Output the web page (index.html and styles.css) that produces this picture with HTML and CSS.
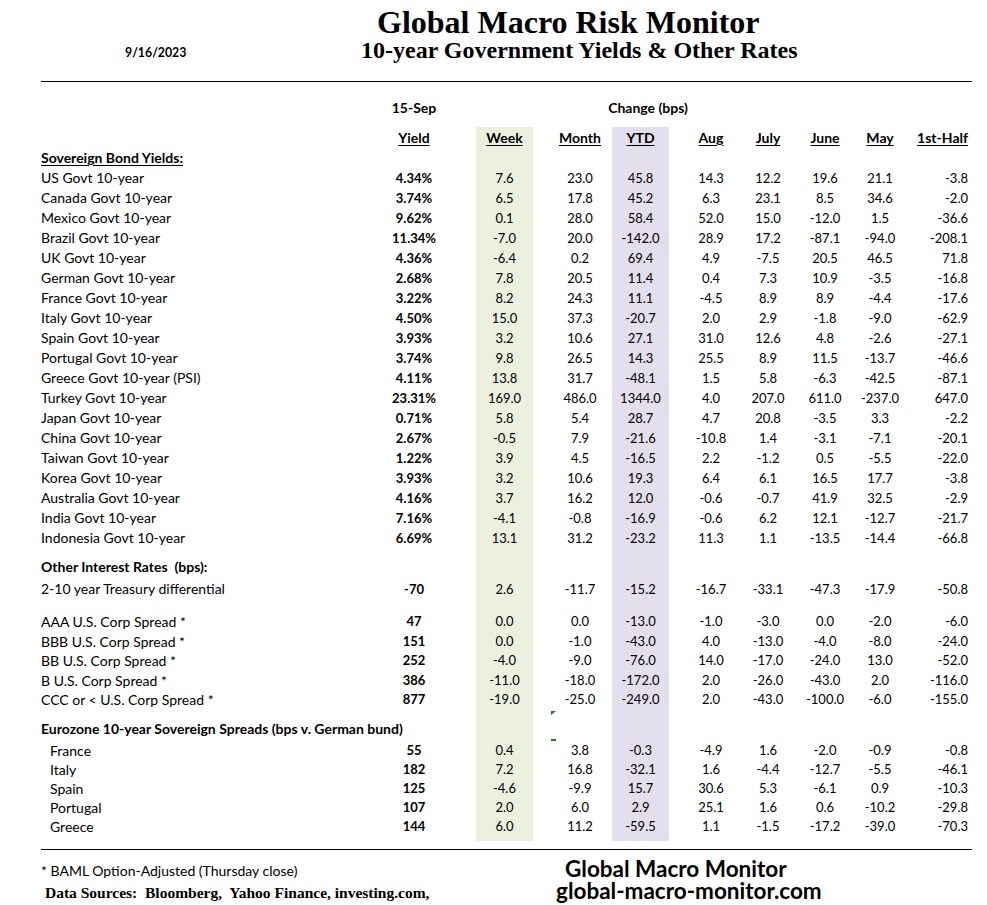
FILE: index.html
```html
<!DOCTYPE html>
<html>
<head>
<meta charset="utf-8">
<link rel="stylesheet" href="styles.css">
</head>
<body>
<div class="page">
  <header class="header">
    <div class="date">9/16/2023</div>
    <div class="titles">
      <div class="title">Global Macro Risk Monitor</div>
      <div class="subtitle">10-year Government Yields &amp; Other Rates</div>
    </div>
  </header>

  <div class="row toprow">
    <span class="c yld">15-Sep</span>
    <span class="chg">Change (bps)</span>
  </div>

  <div class="table">
    <div class="row head">
      <span class="c yld u">Yield</span><span class="c wk u">Week</span><span class="c mo u">Month</span><span class="c ytd u">YTD</span><span class="c aug u">Aug</span><span class="c jul u">July</span><span class="c jun u">June</span><span class="c may u">May</span><span class="c half hh u">1st-Half</span>
    </div>

    <div class="row"><span class="lbl sec u">Sovereign Bond Yields:</span></div>
    <div class="row"><span class="lbl">US Govt 10-year</span><span class="c yld">4.34%</span><span class="c wk">7.6</span><span class="c mo">23.0</span><span class="c ytd">45.8</span><span class="c aug">14.3</span><span class="c jul">12.2</span><span class="c jun">19.6</span><span class="c may">21.1</span><span class="c half">-3.8</span></div>
    <div class="row"><span class="lbl">Canada Govt 10-year</span><span class="c yld">3.74%</span><span class="c wk">6.5</span><span class="c mo">17.8</span><span class="c ytd">45.2</span><span class="c aug">6.3</span><span class="c jul">23.1</span><span class="c jun">8.5</span><span class="c may">34.6</span><span class="c half">-2.0</span></div>
    <div class="row"><span class="lbl">Mexico Govt 10-year</span><span class="c yld">9.62%</span><span class="c wk">0.1</span><span class="c mo">28.0</span><span class="c ytd">58.4</span><span class="c aug">52.0</span><span class="c jul">15.0</span><span class="c jun">-12.0</span><span class="c may">1.5</span><span class="c half">-36.6</span></div>
    <div class="row"><span class="lbl">Brazil Govt 10-year</span><span class="c yld">11.34%</span><span class="c wk">-7.0</span><span class="c mo">20.0</span><span class="c ytd">-142.0</span><span class="c aug">28.9</span><span class="c jul">17.2</span><span class="c jun">-87.1</span><span class="c may">-94.0</span><span class="c half">-208.1</span></div>
    <div class="row"><span class="lbl">UK Govt 10-year</span><span class="c yld">4.36%</span><span class="c wk">-6.4</span><span class="c mo">0.2</span><span class="c ytd">69.4</span><span class="c aug">4.9</span><span class="c jul">-7.5</span><span class="c jun">20.5</span><span class="c may">46.5</span><span class="c half">71.8</span></div>
    <div class="row"><span class="lbl">German Govt 10-year</span><span class="c yld">2.68%</span><span class="c wk">7.8</span><span class="c mo">20.5</span><span class="c ytd">11.4</span><span class="c aug">0.4</span><span class="c jul">7.3</span><span class="c jun">10.9</span><span class="c may">-3.5</span><span class="c half">-16.8</span></div>
    <div class="row"><span class="lbl">France Govt 10-year</span><span class="c yld">3.22%</span><span class="c wk">8.2</span><span class="c mo">24.3</span><span class="c ytd">11.1</span><span class="c aug">-4.5</span><span class="c jul">8.9</span><span class="c jun">8.9</span><span class="c may">-4.4</span><span class="c half">-17.6</span></div>
    <div class="row"><span class="lbl">Italy Govt 10-year</span><span class="c yld">4.50%</span><span class="c wk">15.0</span><span class="c mo">37.3</span><span class="c ytd">-20.7</span><span class="c aug">2.0</span><span class="c jul">2.9</span><span class="c jun">-1.8</span><span class="c may">-9.0</span><span class="c half">-62.9</span></div>
    <div class="row"><span class="lbl">Spain Govt 10-year</span><span class="c yld">3.93%</span><span class="c wk">3.2</span><span class="c mo">10.6</span><span class="c ytd">27.1</span><span class="c aug">31.0</span><span class="c jul">12.6</span><span class="c jun">4.8</span><span class="c may">-2.6</span><span class="c half">-27.1</span></div>
    <div class="row"><span class="lbl">Portugal Govt 10-year</span><span class="c yld">3.74%</span><span class="c wk">9.8</span><span class="c mo">26.5</span><span class="c ytd">14.3</span><span class="c aug">25.5</span><span class="c jul">8.9</span><span class="c jun">11.5</span><span class="c may">-13.7</span><span class="c half">-46.6</span></div>
    <div class="row"><span class="lbl">Greece Govt 10-year (PSI)</span><span class="c yld">4.11%</span><span class="c wk">13.8</span><span class="c mo">31.7</span><span class="c ytd">-48.1</span><span class="c aug">1.5</span><span class="c jul">5.8</span><span class="c jun">-6.3</span><span class="c may">-42.5</span><span class="c half">-87.1</span></div>
    <div class="row"><span class="lbl">Turkey Govt 10-year</span><span class="c yld">23.31%</span><span class="c wk">169.0</span><span class="c mo">486.0</span><span class="c ytd">1344.0</span><span class="c aug">4.0</span><span class="c jul">207.0</span><span class="c jun">611.0</span><span class="c may">-237.0</span><span class="c half">647.0</span></div>
    <div class="row"><span class="lbl">Japan Govt 10-year</span><span class="c yld">0.71%</span><span class="c wk">5.8</span><span class="c mo">5.4</span><span class="c ytd">28.7</span><span class="c aug">4.7</span><span class="c jul">20.8</span><span class="c jun">-3.5</span><span class="c may">3.3</span><span class="c half">-2.2</span></div>
    <div class="row"><span class="lbl">China Govt 10-year</span><span class="c yld">2.67%</span><span class="c wk">-0.5</span><span class="c mo">7.9</span><span class="c ytd">-21.6</span><span class="c aug">-10.8</span><span class="c jul">1.4</span><span class="c jun">-3.1</span><span class="c may">-7.1</span><span class="c half">-20.1</span></div>
    <div class="row"><span class="lbl">Taiwan Govt 10-year</span><span class="c yld">1.22%</span><span class="c wk">3.9</span><span class="c mo">4.5</span><span class="c ytd">-16.5</span><span class="c aug">2.2</span><span class="c jul">-1.2</span><span class="c jun">0.5</span><span class="c may">-5.5</span><span class="c half">-22.0</span></div>
    <div class="row"><span class="lbl">Korea Govt 10-year</span><span class="c yld">3.93%</span><span class="c wk">3.2</span><span class="c mo">10.6</span><span class="c ytd">19.3</span><span class="c aug">6.4</span><span class="c jul">6.1</span><span class="c jun">16.5</span><span class="c may">17.7</span><span class="c half">-3.8</span></div>
    <div class="row"><span class="lbl">Australia Govt 10-year</span><span class="c yld">4.16%</span><span class="c wk">3.7</span><span class="c mo">16.2</span><span class="c ytd">12.0</span><span class="c aug">-0.6</span><span class="c jul">-0.7</span><span class="c jun">41.9</span><span class="c may">32.5</span><span class="c half">-2.9</span></div>
    <div class="row"><span class="lbl">India Govt 10-year</span><span class="c yld">7.16%</span><span class="c wk">-4.1</span><span class="c mo">-0.8</span><span class="c ytd">-16.9</span><span class="c aug">-0.6</span><span class="c jul">6.2</span><span class="c jun">12.1</span><span class="c may">-12.7</span><span class="c half">-21.7</span></div>
    <div class="row"><span class="lbl">Indonesia Govt 10-year</span><span class="c yld">6.69%</span><span class="c wk">13.1</span><span class="c mo">31.2</span><span class="c ytd">-23.2</span><span class="c aug">11.3</span><span class="c jul">1.1</span><span class="c jun">-13.5</span><span class="c may">-14.4</span><span class="c half">-66.8</span></div>

    <div class="row gap-sec"><span class="lbl sec">Other Interest Rates &nbsp;(bps):</span></div>
    <div class="row gap-small"><span class="lbl">2-10 year Treasury differential</span><span class="c yld">-70</span><span class="c wk">2.6</span><span class="c mo">-11.7</span><span class="c ytd">-15.2</span><span class="c aug">-16.7</span><span class="c jul">-33.1</span><span class="c jun">-47.3</span><span class="c may">-17.9</span><span class="c half">-50.8</span></div>

    <div class="row corp gap-corp"><span class="lbl">AAA U.S. Corp Spread *</span><span class="c yld">47</span><span class="c wk">0.0</span><span class="c mo">0.0</span><span class="c ytd">-13.0</span><span class="c aug">-1.0</span><span class="c jul">-3.0</span><span class="c jun">0.0</span><span class="c may">-2.0</span><span class="c half">-6.0</span></div>
    <div class="row corp"><span class="lbl">BBB U.S. Corp Spread *</span><span class="c yld">151</span><span class="c wk">0.0</span><span class="c mo">-1.0</span><span class="c ytd">-43.0</span><span class="c aug">4.0</span><span class="c jul">-13.0</span><span class="c jun">-4.0</span><span class="c may">-8.0</span><span class="c half">-24.0</span></div>
    <div class="row corp"><span class="lbl">BB U.S. Corp Spread *</span><span class="c yld">252</span><span class="c wk">-4.0</span><span class="c mo">-9.0</span><span class="c ytd">-76.0</span><span class="c aug">14.0</span><span class="c jul">-17.0</span><span class="c jun">-24.0</span><span class="c may">13.0</span><span class="c half">-52.0</span></div>
    <div class="row corp"><span class="lbl">B U.S. Corp Spread *</span><span class="c yld">386</span><span class="c wk">-11.0</span><span class="c mo">-18.0</span><span class="c ytd">-172.0</span><span class="c aug">2.0</span><span class="c jul">-26.0</span><span class="c jun">-43.0</span><span class="c may">2.0</span><span class="c half">-116.0</span></div>
    <div class="row corp"><span class="lbl">CCC or &lt; U.S. Corp Spread *</span><span class="c yld">877</span><span class="c wk">-19.0</span><span class="c mo flagged">-25.0<i class="flag flag-tri"></i></span><span class="c ytd">-249.0</span><span class="c aug">2.0</span><span class="c jul">-43.0</span><span class="c jun">-100.0</span><span class="c may">-6.0</span><span class="c half">-155.0</span></div>

    <div class="row gap-euro"><span class="lbl sec wide">Eurozone 10-year Sovereign Spreads (bps v. German bund)</span><span class="c mo flagged"><i class="flag flag-dash"></i></span></div>
    <div class="row euro first"><span class="lbl ind">France</span><span class="c yld">55</span><span class="c wk">0.4</span><span class="c mo">3.8</span><span class="c ytd">-0.3</span><span class="c aug">-4.9</span><span class="c jul">1.6</span><span class="c jun">-2.0</span><span class="c may">-0.9</span><span class="c half">-0.8</span></div>
    <div class="row euro"><span class="lbl ind">Italy</span><span class="c yld">182</span><span class="c wk">7.2</span><span class="c mo">16.8</span><span class="c ytd">-32.1</span><span class="c aug">1.6</span><span class="c jul">-4.4</span><span class="c jun">-12.7</span><span class="c may">-5.5</span><span class="c half">-46.1</span></div>
    <div class="row euro"><span class="lbl ind">Spain</span><span class="c yld">125</span><span class="c wk">-4.6</span><span class="c mo">-9.9</span><span class="c ytd">15.7</span><span class="c aug">30.6</span><span class="c jul">5.3</span><span class="c jun">-6.1</span><span class="c may">0.9</span><span class="c half">-10.3</span></div>
    <div class="row euro"><span class="lbl ind">Portugal</span><span class="c yld">107</span><span class="c wk">2.0</span><span class="c mo">6.0</span><span class="c ytd">2.9</span><span class="c aug">25.1</span><span class="c jul">1.6</span><span class="c jun">0.6</span><span class="c may">-10.2</span><span class="c half">-29.8</span></div>
    <div class="row euro"><span class="lbl ind">Greece</span><span class="c yld">144</span><span class="c wk">6.0</span><span class="c mo">11.2</span><span class="c ytd">-59.5</span><span class="c aug">1.1</span><span class="c jul">-1.5</span><span class="c jun">-17.2</span><span class="c may">-39.0</span><span class="c half">-70.3</span></div>
  </div>

  <footer class="footer">
    <div class="notes">
      <div class="note">* BAML Option-Adjusted (Thursday close)</div>
      <div class="sources">Data Sources:&nbsp; Bloomberg,&nbsp; Yahoo Finance, investing.com,</div>
    </div>
    <div class="brand">
      <div class="brand-name">Global Macro Monitor</div>
      <div class="brand-url">global-macro-monitor.com</div>
    </div>
  </footer>
</div>
</body>
</html>
```

FILE: styles.css
```css
html, body {
  margin: 0;
  padding: 0;
  background: #ffffff;
}

body {
  font-family: "Lato", "Liberation Sans", sans-serif;
  font-size: 13px;
  color: #000;
}

.page {
  width: 931px;
  margin-left: 41px;
}

/* ---------- header ---------- */
.header {
  height: 81px;
  border-bottom: 1px solid #000;
  display: grid;
  grid-template-columns: 320px 1fr;
  box-sizing: content-box;
}

.date {
  padding-left: 84px;
  margin-top: 43px;
  line-height: 20px;
  height: 20px;
  font-size: 12.3px;
  font-weight: 700;
}

.titles {
  font-family: "Liberation Serif", "Times New Roman", serif;
  font-weight: 700;
  white-space: nowrap;
}

.title {
  font-size: 32px;
  line-height: 31px;
  padding-top: 7px;
  padding-left: 16px;
}

.subtitle {
  font-size: 24px;
  line-height: 24px;
}

/* ---------- grid rows ---------- */
.row {
  display: grid;
  grid-template-columns: 343px 60px 32px 57px 15px 64px 57px 15px 54px 3px 54px 3px 54px 1px 54px 61px;
  height: 20px;
  line-height: 20px;
}

.lbl {
  grid-column: 1;
  white-space: nowrap;
  font-size: 14px;
}

.c {
  display: flex;
  justify-content: center;
  white-space: nowrap;
}

.yld { grid-column: 2; font-weight: 700; }
.wk { grid-column: 4; }
.mo { grid-column: 6; }
.ytd { grid-column: 7; }
.aug { grid-column: 9; }
.jul { grid-column: 11; }
.jun { grid-column: 13; }
.may { grid-column: 15; }
.half { grid-column: 16; justify-content: flex-end; }

.u {
  text-decoration: underline;
  text-underline-offset: 2px;
}

.toprow {
  margin-top: 16px;
  font-weight: 700;
  font-size: 14px;
}

.chg {
  grid-column: 6 / 10;
  text-align: center;
  padding-left: 10px;
  white-space: nowrap;
}

/* ---------- table body with column bands ---------- */
.table {
  margin-top: 9px;
  padding-bottom: 5.5px;
  background-image: linear-gradient(to right,
    transparent 0, transparent 435px,
    #ebf1de 435px, #ebf1de 492px,
    transparent 492px, transparent 571px,
    #e4dfec 571px, #e4dfec 628px,
    transparent 628px);
}

.head {
  height: 21px;
  line-height: 22px;
  font-weight: 700;
  font-size: 14px;
}

.head .c { font-weight: 700; }

.sec {
  font-weight: 700;
}

.wide {
  grid-column: 1 / 6;
}

.gap-sec { margin-top: 9px; }
.gap-small { margin-top: 2px; }
.gap-corp { margin-top: 13px; }
.gap-euro { margin-top: 9.5px; }

.corp {
  height: 19.5px;
  line-height: 19.5px;
}

.euro {
  height: 19px;
  line-height: 19px;
}

.euro.first { margin-top: 1.5px; }

.ind { padding-left: 9px; }

/* little spreadsheet cell markers */
.flagged { position: relative; }

.flag {
  position: absolute;
  left: 3px;
  display: block;
}

.flag-tri {
  top: 21px;
  width: 0;
  height: 0;
  border-top: 4px solid #1f7a1f;
  border-right: 5px solid transparent;
}

.flag-dash {
  top: 20px;
  width: 5px;
  height: 1.5px;
  background: #1f7a1f;
}

/* ---------- footer ---------- */
.footer {
  margin-top: 8px;
  border-top: 1px solid #000;
  display: grid;
  grid-template-columns: 514px 1fr;
}

.notes {
  padding-top: 11px;
}

.note {
  line-height: 20px;
  height: 20px;
  font-size: 14px;
}

.sources {
  margin-top: 2px;
  padding-left: 4px;
  line-height: 20px;
  font-family: "Liberation Serif", "Times New Roman", serif;
  font-weight: 700;
  font-size: 15.5px;
  white-space: nowrap;
}

.brand {
  padding-top: 8px;
  font-weight: 700;
  font-size: 22.5px;
  white-space: nowrap;
}

.brand-name {
  line-height: 22px;
  padding-left: 10px;
}

.brand-url {
  line-height: 22px;
  padding-left: 1px;
}
```
